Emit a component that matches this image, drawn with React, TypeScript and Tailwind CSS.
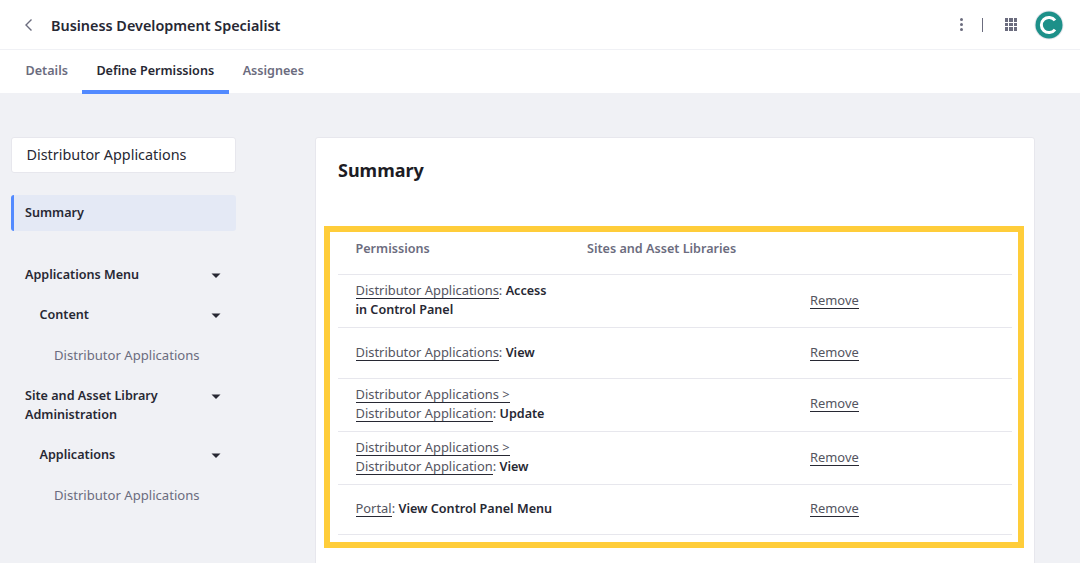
import React from "react";

const Caret = () => (
  <svg width="10" height="5" viewBox="0 0 10 5" className="block shrink-0">
    <path d="M0.5 0.5H9.5L5 5Z" fill="#272833" />
  </svg>
);

const Link = ({ children }: { children: React.ReactNode }) => (
  <span className="text-[#54555f] border-b border-[#272833] leading-[16px] inline-block">{children}</span>
);

const Strong = ({ children }: { children: React.ReactNode }) => (
  <b className="font-semibold text-[12.6px] text-[#272833]">{children}</b>
);

type Row = { h: string; removeClass: string; body: React.ReactNode };

const rows: Row[] = [
  {
    h: "h-[53px]",
    removeClass: "",
    body: (
      <>
        <Link>Distributor Applications</Link>: <Strong>Access in Control Panel</Strong>
      </>
    ),
  },
  {
    h: "h-[51px]",
    removeClass: "",
    body: (
      <>
        <Link>Distributor Applications</Link>: <Strong>View</Strong>
      </>
    ),
  },
  {
    h: "h-[53px]",
    removeClass: "mb-[2px]",
    body: (
      <>
        <Link>Distributor Applications &gt;</Link> <Link>Distributor Application</Link>: <Strong>Update</Strong>
      </>
    ),
  },
  {
    h: "h-[53px]",
    removeClass: "",
    body: (
      <>
        <Link>Distributor Applications &gt;</Link> <Link>Distributor Application</Link>: <Strong>View</Strong>
      </>
    ),
  },
  {
    h: "h-[50px]",
    removeClass: "",
    body: (
      <>
        <Link>Portal</Link>: <Strong>View Control Panel Menu</Strong>
      </>
    ),
  },
];

const NavItem = ({ label, pl, mt, wide }: { label: React.ReactNode; pl: string; mt: string; wide?: boolean }) => (
  <div className={`flex items-start justify-between ${pl} ${mt} pr-[15px] text-[12.6px] leading-[19px] font-semibold text-[#272833]`}>
    <span className={wide ? "w-[150px]" : ""}>{label}</span>
    <span className="pt-[8px]">
      <Caret />
    </span>
  </div>
);

export default function App() {
  return (
    <div className="w-[1080px] h-[563px] overflow-hidden bg-[#f0f1f5] font-['Noto_Sans',sans-serif] flex flex-col">
      <header className="h-[50px] bg-white border-b border-[#f0f1f5] flex items-center shrink-0 pl-[24px] pr-[16px]">
        <svg width="9" height="14" viewBox="0 0 9 14" fill="none" className="mr-[18px]">
          <path d="M7.5 1.5L2 7l5.5 5.5" stroke="#6b6c7e" strokeWidth="1.4" />
        </svg>
        <h1 className="text-[14.4px] font-semibold text-[#272833] leading-none pt-[3px]">Business Development Specialist</h1>
        <div className="ml-auto flex items-center">
          <div className="flex flex-col gap-[2px]">
            <span className="w-[3px] h-[3px] rounded-full bg-[#6b6c7e]" />
            <span className="w-[3px] h-[3px] rounded-full bg-[#6b6c7e]" />
            <span className="w-[3px] h-[3px] rounded-full bg-[#6b6c7e]" />
          </div>
          <span className="w-px h-[14px] bg-[#6b6c7e] ml-[19px]" />
          <div className="grid grid-cols-3 gap-[1px] ml-[22px]">
            {Array.from({ length: 9 }).map((_, i) => (
              <span key={i} className="w-[3.5px] h-[3.5px] bg-[#6b6c7e]" />
            ))}
          </div>
          <svg width="30" height="30" viewBox="0 0 30 30" className="ml-[17px]">
            <circle cx="15" cy="15" r="14.5" fill="#e7e7ed" />
            <circle cx="15" cy="15" r="13.5" fill="#1d9089" />
            <path d="M21 10.4A7.6 7.6 0 1 0 21 19.6" fill="none" stroke="#fff" strokeWidth="3" />
          </svg>
        </div>
      </header>

      <nav className="h-[43px] bg-white flex shrink-0 pl-[11px] text-[12.6px] font-semibold text-[#6b6c7e]">
        <div className="pl-[14.5px] pr-[14px] pt-[12px]">Details</div>
        <div className="px-[14.5px] pt-[12px] text-[#272833] border-b-4 border-[#528aff] h-[44px]">Define Permissions</div>
        <div className="px-[14px] pt-[12px]">Assignees</div>
      </nav>

      <main className="flex pt-[44px] pl-[11px]">
        <aside className="w-[225px] shrink-0">
          <div className="h-[36px] bg-white border border-[#e7e7ed] rounded-[3px] pl-[14.5px] flex items-center text-[14.4px] text-[#272833]">
            Distributor Applications
          </div>
          <div className="mt-[22px] h-[36px] bg-[#e4e9f5] rounded-[3px] border-l-[3px] border-[#528aff] pl-[11px] flex items-center text-[12.6px] font-semibold text-[#272833]">
            Summary
          </div>
          <NavItem label="Applications Menu" pl="pl-[14px]" mt="mt-[34px]" />
          <NavItem label="Content" pl="pl-[28.5px]" mt="mt-[21px]" />
          <div className="pl-[43px] mt-[22px] text-[13.1px] leading-[19px] text-[#6b6c7e]">Distributor Applications</div>
          <NavItem label="Site and Asset Library Administration" pl="pl-[14px]" mt="mt-[21px]" wide />
          <NavItem label="Applications" pl="pl-[28.5px]" mt="mt-[21px]" />
          <div className="pl-[43px] mt-[22px] text-[13.1px] leading-[19px] text-[#6b6c7e]">Distributor Applications</div>
        </aside>

        <section className="ml-[79px] w-[720px] h-[500px] bg-white border border-[#e7e7ed] rounded-[3px] pl-[8px] pt-[19px]">
          <h2 className="pl-[14px] text-[18px] leading-[27px] font-bold text-[#1c1c24]">Summary</h2>
          <div className="mt-[42px] w-[700px] h-[322px] border-[6px] border-[#ffcd3a] bg-white pl-[8px] pr-[6px] text-[12.9px] leading-[19px]">
            <div className="h-[43px] border-b border-[#e7e7ed] grid grid-cols-[249px_1fr] pl-[17.5px] pt-[7px] text-[12.6px] font-semibold text-[#6b6c7e]">
              <span>Permissions</span>
              <span className="-ml-[17.5px]">Sites and Asset Libraries</span>
            </div>
            {rows.map((r, i) => (
              <div key={i} className={`${r.h} border-b border-[#e7e7ed] flex items-center pl-[17.5px] pb-[2px]`}>
                <div className="w-[200px] text-[#54555f]">{r.body}</div>
                <div className={`ml-[254.5px] text-[#54555f] ${r.removeClass}`}>
                  <Link>Remove</Link>
                </div>
              </div>
            ))}
          </div>
        </section>
      </main>
    </div>
  );
}
